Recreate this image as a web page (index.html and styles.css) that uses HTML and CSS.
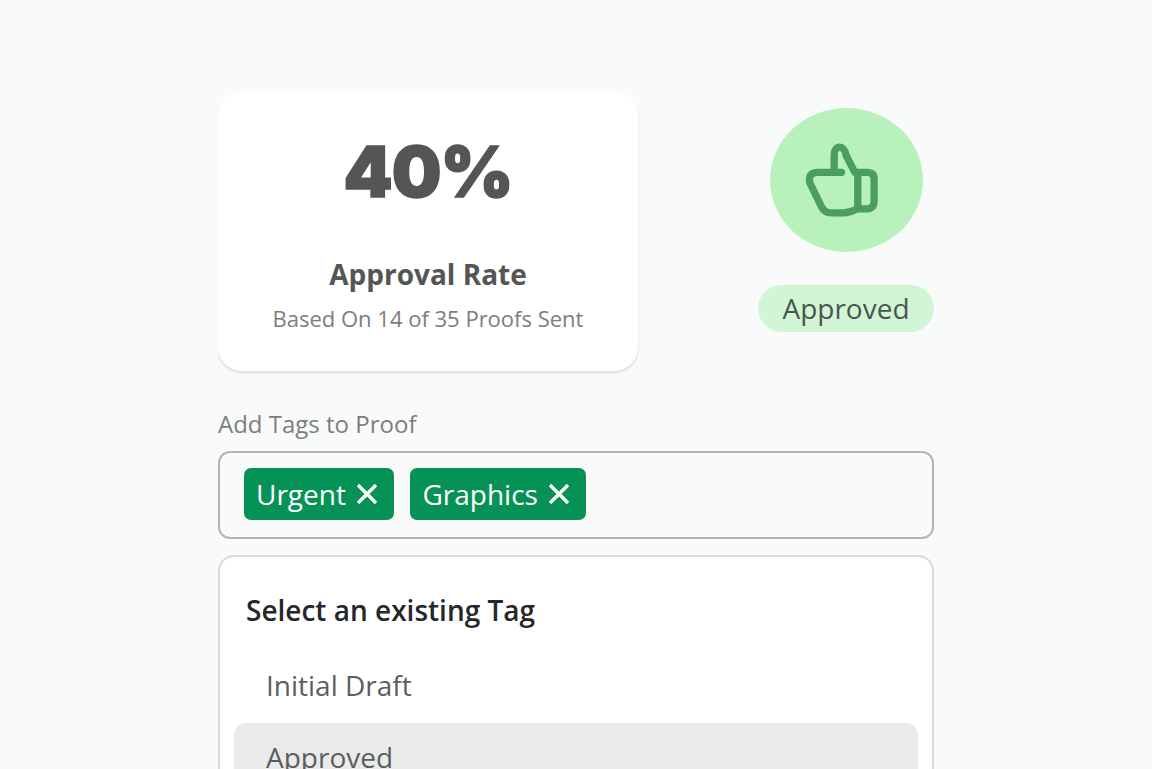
FILE: index.html
```html
<!DOCTYPE html>
<html lang="en">
<head>
<meta charset="utf-8">
<title>Approval Rate</title>
<link rel="stylesheet" href="styles.css">
</head>
<body>
<main class="panel">
  <section class="top">
    <div class="card">
      <div class="percent">40%</div>
      <div class="rate">Approval Rate</div>
      <div class="based">Based On 14 of 35 Proofs Sent</div>
    </div>
    <div class="status">
      <div class="circle">
        <svg class="thumb" viewBox="90 55 460 432" width="153" height="144" aria-hidden="true">
          <path d="M305 248H232Q202 250 210 280L245 352Q254 370 275 370H310Q330 369 352 358H382Q403 357 403 335V268Q403 248 382 248H345L318 195C315 165 283 165 283 195V246M354 250V356" fill="none" stroke="#4b9e5f" stroke-width="22" stroke-linecap="round" stroke-linejoin="round"/>
        </svg>
      </div>
      <div class="pill">Approved</div>
    </div>
  </section>
  <label class="label">Add Tags to Proof</label>
  <div class="input">
    <span class="tag">Urgent <svg class="x" viewBox="0 0 20 20" aria-hidden="true"><path d="M1 1L19 19M19 1L1 19"/></svg></span>
    <span class="tag">Graphics <svg class="x" viewBox="0 0 20 20" aria-hidden="true"><path d="M1 1L19 19M19 1L1 19"/></svg></span>
  </div>
  <div class="dropdown">
    <div class="heading">Select an existing Tag</div>
    <div class="item">Initial Draft</div>
    <div class="item active">Approved</div>
  </div>
</main>
</body>
</html>
```
FILE: styles.css
```css
* { box-sizing: border-box; }
html, body { margin: 0; }
body {
  background: #f9fafa;
  font-family: "Open Sans", sans-serif;
  overflow: hidden;
  height: 769px;
}
.panel {
  width: 716px;
  margin-left: 218px;
  padding-top: 91px;
  display: flex;
  flex-direction: column;
  height: 769px;
  overflow: hidden;
}
.top {
  display: flex;
  justify-content: space-between;
  flex: none;
  height: 280px;
}
.card {
  width: 420px;
  height: 280px;
  background: #fff;
  border-radius: 24px;
  box-shadow: 0 2px 3px rgba(0, 0, 0, 0.12);
  display: flex;
  flex-direction: column;
  align-items: center;
}
.percent {
  font-family: Inter, sans-serif;
  font-weight: 900;
  font-size: 70px;
  line-height: 84px;
  margin-top: 39px;
  letter-spacing: -1px;
  -webkit-text-stroke: 1.5px #545655;
  color: #545655;
}
.rate {
  margin-top: 42px;
  font-size: 28px;
  line-height: 36px;
  font-weight: 700;
  color: #545655;
}
.based {
  margin-top: 11px;
  font-size: 22px;
  line-height: 30px;
  color: #7c7e7d;
}
.status {
  width: 176px;
  display: flex;
  flex-direction: column;
  align-items: center;
  padding-top: 17px;
}
.circle {
  width: 153px;
  height: 144px;
  border-radius: 50%;
  background: #b9f1bc;
}
.thumb { display: block; }
.pill {
  margin-top: 33px;
  width: 176px;
  height: 47px;
  border-radius: 24px;
  background: #d2f6d5;
  color: #4a5650;
  font-size: 28px;
  line-height: 47px;
  text-align: center;
}
.label {
  margin-top: 36px;
  font-size: 24px;
  line-height: 33px;
  color: #7c7e7d;
}
.input {
  flex: none;
  margin-top: 11px;
  height: 88px;
  border: 2px solid #b3b4b4;
  border-radius: 12px;
  padding: 15px 24px;
  display: flex;
  gap: 16px;
  align-items: flex-start;
}
.tag {
  height: 52px;
  padding: 0 17.5px 0 12px;
  background: #069257;
  color: #fff;
  border-radius: 7px;
  font-size: 28px;
  line-height: 52px;
  display: flex;
  align-items: center;
  gap: 11px;
  white-space: nowrap;
}
.x {
  width: 20px;
  height: 20px;
  fill: none;
  stroke: #fff;
  stroke-width: 3.4;
}
.dropdown {
  flex: none;
  margin-top: 16px;
  height: 260px;
  background: #fff;
  border: 2px solid #d8d9d9;
  border-radius: 16px;
  padding: 0 14px;
  box-shadow: 0 16px 40px rgba(0, 0, 0, 0.02);
}
.heading {
  margin-top: 33px;
  padding-left: 12px;
  font-size: 28px;
  line-height: 40px;
  font-weight: 600;
  color: #25282a;
}
.item {
  height: 72px;
  padding: 15px 32px;
  font-size: 28px;
  line-height: 38px;
  color: #5c5e5d;
  border-radius: 12px;
}
.heading + .item { margin-top: 21px; }
.item.active { background: #e9ebeb; }
```
